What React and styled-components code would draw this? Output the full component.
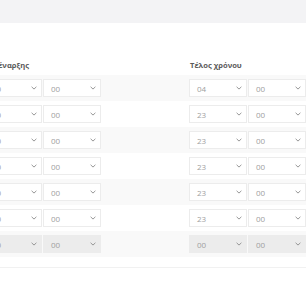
import styled, { createGlobalStyle } from "styled-components";

const GlobalStyle = createGlobalStyle`
  html, body {
    margin: 0;
    padding: 0;
    background: #ffffff;
    overflow: hidden;
  }
  body {
    font-family: "Open Sans", "Noto Sans", sans-serif;
  }
`

const Page = styled.div`
  width: 306px;
  height: 305px;
  overflow: hidden;
  display: flex;
  flex-direction: column;
`

const TopBand = styled.div`
  height: 23px;
  background: #f3f3f5;
  flex-shrink: 0;
`

const Table = styled.div`
  margin-top: 32px;
  display: flex;
  flex-direction: column;
`

const HeaderRow = styled.div`
  height: 20px;
  display: flex;
  align-items: flex-end;
  padding-bottom: 4px;
  box-sizing: border-box;
`

const HeaderLabel = styled.div`
  width: ${props => props.width}px;
  margin-left: ${props => props.offset || 0}px;
  flex-shrink: 0;
  font-size: 7.6px;
  font-weight: 700;
  color: #5a5a5a;
  line-height: 11px;
  white-space: nowrap;
`

const Row = styled.div`
  height: 26px;
  display: flex;
  align-items: center;
  background: ${props => props.striped ? '#f9f9f9' : '#ffffff'};
`

const SelectGroup = styled.div`
  display: flex;
  gap: 1px;
  flex-shrink: 0;
  margin-left: ${props => props.offset || 0}px;
`

const SelectBox = styled.div`
  width: 58px;
  height: 18px;
  box-sizing: border-box;
  border: 1px solid #ececec;
  background: ${props => props.disabled ? '#ececec' : '#ffffff'};
  display: flex;
  align-items: center;
  justify-content: space-between;
  padding: 0 4px 0 7px;
  font-size: 8px;
  color: #a0a0a0;
`

const Footer = styled.div`
  margin-top: 10px;
  height: 1px;
  background: #f1f1f1;
`

const Chevron = () => (
  <svg width="6" height="4" viewBox="0 0 6 4">
    <path d="M0.6 0.8 L3 3.1 L5.4 0.8" fill="none" stroke="#8a8a8a" strokeWidth="0.9" />
  </svg>
)

function Select({ value, disabled }) {
  return <SelectBox disabled={disabled}>
    <span>{value}</span>
    <Chevron />
  </SelectBox>
}

const rows = [
  { start: ["00", "00"], end: ["04", "00"] },
  { start: ["00", "00"], end: ["23", "00"] },
  { start: ["00", "00"], end: ["23", "00"] },
  { start: ["00", "00"], end: ["23", "00"] },
  { start: ["00", "00"], end: ["23", "00"] },
  { start: ["00", "00"], end: ["23", "00"] },
  { start: ["00", "00"], end: ["00", "00"], disabled: true },
]

export default function App() {
  return <>
    <GlobalStyle />
    <Page>
      <TopBand />
      <Table>
        <HeaderRow>
          <HeaderLabel width={210} offset={-20}>Ώρα έναρξης</HeaderLabel>
          <HeaderLabel width={117}>Τέλος χρόνου</HeaderLabel>
        </HeaderRow>
        {rows.map((row, i) =>
          <Row key={i} striped={i % 2 === 0}>
            <SelectGroup offset={-16}>
              <Select value={row.start[0]} disabled={row.disabled} />
              <Select value={row.start[1]} disabled={row.disabled} />
            </SelectGroup>
            <SelectGroup offset={88}>
              <Select value={row.end[0]} disabled={row.disabled} />
              <Select value={row.end[1]} disabled={row.disabled} />
            </SelectGroup>
          </Row>
        )}
        <Footer />
      </Table>
    </Page>
  </>
}
